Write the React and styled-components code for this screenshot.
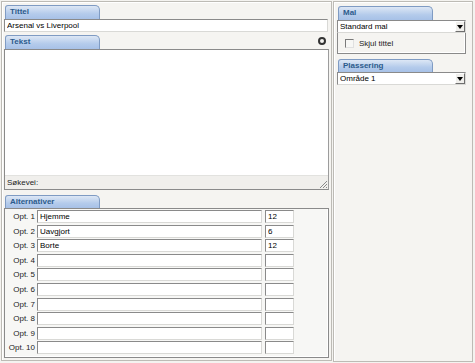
import React from "react";
import styled, { createGlobalStyle } from "styled-components";

const Global = createGlobalStyle`
  html, body { margin: 0; padding: 0; background: #e9e8e4; }
  body { font-family: "Liberation Sans", Arial, sans-serif; font-size: 8px; color: #000; }
  * { box-sizing: border-box; }
`;

const Page = styled.div`
  display: flex;
  gap: 1px;
  padding: 1px 0 0 1px;
  width: 475px;
  height: 363px;
  background: #f4f3f0;
`;

const Panel = styled.div`
  width: ${(p) => p.$w}px;
  height: ${(p) => p.$h}px;
  border: 1px solid #bdbbb5;
  box-shadow: inset 1px 1px 0 #ffffff;
  background: #f5f4f1;
  padding: 3px ${(p) => p.$pr}px 0 ${(p) => p.$pl}px;
  display: flex;
  flex-direction: column;
`;

const HeaderRow = styled.div`
  display: flex;
  justify-content: space-between;
  align-items: flex-end;
  margin-top: ${(p) => p.$mt || 0}px;
`;

const Tab = styled.div`
  width: 95px;
  height: ${(p) => p.$h || 14}px;
  margin-left: 1px;
  border: 1px solid #7f9bc3;
  border-bottom: none;
  border-radius: 3px 5px 0 0;
  background: linear-gradient(#dde7f5, #b4cbeb 60%, #a7c1e7);
  color: #2c5b8c;
  font: bold 8px "Liberation Sans", Arial, sans-serif;
  line-height: 11px;
  padding-left: 4px;
`;

const CollapseIcon = styled.svg`
  display: block;
  margin: 0 3px 4px 0;
`;

const TextInput = styled.input`
  display: block;
  width: ${(p) => (p.$w ? `${p.$w}px` : "100%")};
  height: 13px;
  margin: 0 0 0 ${(p) => p.$ml || 0}px;
  padding: 0 2px;
  border: 1px solid;
  border-color: #8a8a8a #d9d9d6 #d9d9d6 #8a8a8a;
  background: #ffffff;
  font: 8px "Liberation Sans", Arial, sans-serif;
  color: #000;
  outline: none;
`;

const TextArea = styled.div`
  height: 141px;
  border: 1px solid #8a8a8a;
  border-right-color: #9c9c9c;
  display: flex;
  flex-direction: column;
`;

const TextBody = styled.div`
  flex: 1;
  background: #ffffff;
`;

const PathBar = styled.div`
  height: 14px;
  border-top: 1px solid #e2e2df;
  background: #f0efec;
  display: flex;
  align-items: center;
  justify-content: space-between;
  padding-left: 2px;
  font-size: 8px;
  color: #222;
`;

const Grip = styled.svg`
  display: block;
  align-self: flex-end;
`;

const OptionsBox = styled.div`
  height: 150px;
  width: 325px;
  border: 1px solid #8a8a8a;
  box-shadow: inset -1px -1px 0 #ffffff;
  background: #f7f7f5;
  padding: 1px 0 0 0;
  display: grid;
  grid-auto-rows: 13px;
  row-gap: 1.6px;
`;

const OptRow = styled.div`
  display: grid;
  grid-template-columns: 30px 225px 30px;
  column-gap: 2px;
  align-items: center;
`;

const OptLabel = styled.span`
  text-align: right;
  font-size: 8px;
  color: #222;
`;

const Select = styled.div`
  height: 13px;
  width: 129px;
  border: 1px solid;
  border-color: #8a8a8a #d9d9d6 #d9d9d6 #8a8a8a;
  background: #ffffff;
  display: flex;
  align-items: center;
  justify-content: space-between;
  padding-left: 2px;
  font-size: 8px;
`;

const SelectButton = styled.div`
  width: 10px;
  height: 11px;
  background: #f0efec;
  border: 1px solid;
  border-color: #ffffff #6e6e6e #6e6e6e #ffffff;
  display: flex;
  align-items: center;
  justify-content: center;
`;

const OptionBox = styled.div`
  width: 129px;
  height: 21px;
  border: 1px solid #8a8a8a;
  border-top: none;
  box-shadow: inset -1px -1px 0 #ffffff;
  display: flex;
  align-items: center;
  gap: 5px;
  padding-left: 7px;
`;

const CheckBox = styled.span`
  width: 9px;
  height: 9px;
  border: 1px solid;
  border-color: #7a7a7a #e0e0e0 #e0e0e0 #7a7a7a;
  background: #f7f7f5;
`;

const CheckLabel = styled.span`
  font-size: 8px;
  color: #222;
`;

const options = [
  ["Opt. 1", "Hjemme", "12"],
  ["Opt. 2", "Uavgjort", "6"],
  ["Opt. 3", "Borte", "12"],
  ["Opt. 4", "", ""],
  ["Opt. 5", "", ""],
  ["Opt. 6", "", ""],
  ["Opt. 7", "", ""],
  ["Opt. 8", "", ""],
  ["Opt. 9", "", ""],
  ["Opt. 10", "", ""],
];

const Arrow = () => (
  <svg width="6" height="4" viewBox="0 0 6 4">
    <path d="M0 0H6L3 4Z" fill="#000" />
  </svg>
);

export default function App() {
  return (
    <>
      <Global />
      <Page>
        <Panel $w={331} $h={360} $pr={2} $pl={2}>
          <HeaderRow>
            <Tab>Tittel</Tab>
          </HeaderRow>
          <TextInput $w={324} readOnly value="Arsenal vs Liverpool" />
          <HeaderRow $mt={3}>
            <Tab>Tekst</Tab>
            <CollapseIcon width="8" height="8" viewBox="0 0 8 8">
              <circle cx="4" cy="4" r="3" fill="none" stroke="#333" strokeWidth="2" />
            </CollapseIcon>
          </HeaderRow>
          <TextArea>
            <TextBody />
            <PathBar>
              <span>Søkevei:</span>
              <Grip width="10" height="10" viewBox="0 0 10 10">
                <path d="M9 2L2 9M9 5L5 9M9 8L8 9" stroke="#8a8a8a" strokeWidth="1" />
              </Grip>
            </PathBar>
          </TextArea>
          <HeaderRow $mt={5}>
            <Tab $h={13}>Alternativer</Tab>
          </HeaderRow>
          <OptionsBox>
            {options.map(([label, text, num]) => (
              <OptRow key={label}>
                <OptLabel>{label}</OptLabel>
                <TextInput readOnly value={text} />
                <TextInput $w={29} $ml={1} readOnly value={num} />
              </OptRow>
            ))}
          </OptionsBox>
        </Panel>
        <Panel $w={140} $h={361} $pr={4} $pl={3}>
          <HeaderRow $mt={1}>
            <Tab>Mal</Tab>
          </HeaderRow>
          <Select>
            <span>Standard mal</span>
            <SelectButton>
              <Arrow />
            </SelectButton>
          </Select>
          <OptionBox>
            <CheckBox />
            <CheckLabel>Skjul tittel</CheckLabel>
          </OptionBox>
          <HeaderRow $mt={5}>
            <Tab $h={13}>Plassering</Tab>
          </HeaderRow>
          <Select>
            <span>Område 1</span>
            <SelectButton>
              <Arrow />
            </SelectButton>
          </Select>
        </Panel>
      </Page>
    </>
  );
}
